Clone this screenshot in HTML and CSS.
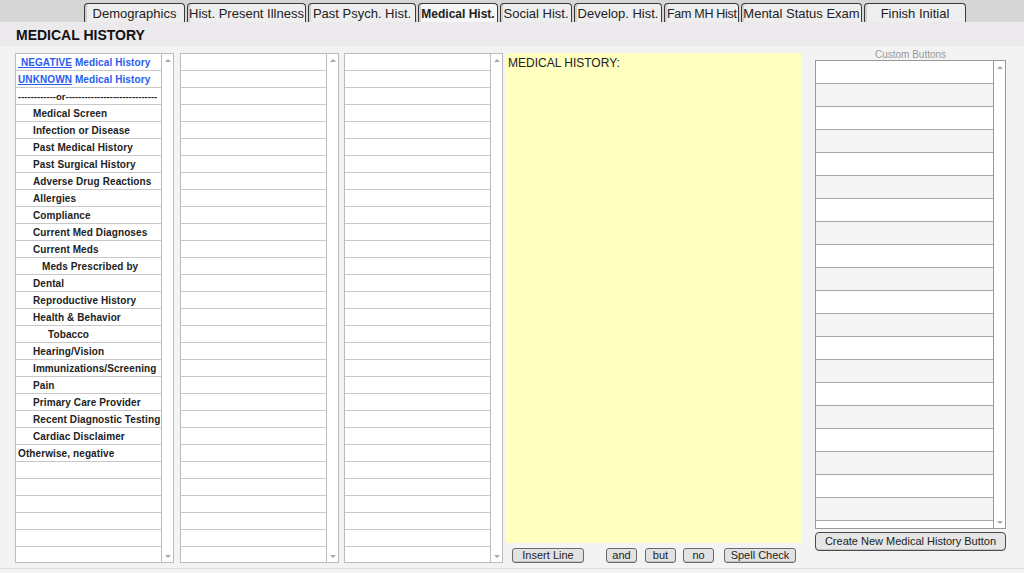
FILE: index.html
```html
<!DOCTYPE html>
<html lang="en">
<head>
    <meta charset="UTF-8">
    <meta name="viewport" content="width=device-width, initial-scale=1.0">
    <title>Medical History</title>
    <link rel="stylesheet" href="styles.css">
</head>
<body>
<div class="tabbar">
    <div class="tab t1">Demographics</div>
    <div class="tab t2">Hist. Present Illness</div>
    <div class="tab t3">Past Psych. Hist.</div>
    <div class="tab t4 active">Medical Hist.</div>
    <div class="tab t5">Social Hist.</div>
    <div class="tab t6">Develop. Hist.</div>
    <div class="tab t7">Fam MH Hist</div>
    <div class="tab t8">Mental Status Exam</div>
    <div class="tab t9">Finish Initial</div>
</div>
<div class="titlebar">MEDICAL HISTORY</div>

<div class="main">
    <div class="list col1">
        <div class="rows">
            <div class="row link"><u>&nbsp;NEGATIVE</u> Medical History</div>
            <div class="row link"><u>UNKNOWN</u> Medical History</div>
            <div class="row dash">------------or-----------------------------</div>
            <div class="row i1">Medical Screen</div>
            <div class="row i1">Infection or Disease</div>
            <div class="row i1">Past Medical History</div>
            <div class="row i1">Past Surgical History</div>
            <div class="row i1">Adverse Drug Reactions</div>
            <div class="row i1">Allergies</div>
            <div class="row i1">Compliance</div>
            <div class="row i1">Current Med Diagnoses</div>
            <div class="row i1">Current Meds</div>
            <div class="row i2">Meds Prescribed by</div>
            <div class="row i1">Dental</div>
            <div class="row i1">Reproductive History</div>
            <div class="row i1">Health &amp; Behavior</div>
            <div class="row i3">Tobacco</div>
            <div class="row i1">Hearing/Vision</div>
            <div class="row i1">Immunizations/Screening</div>
            <div class="row i1">Pain</div>
            <div class="row i1">Primary Care Provider</div>
            <div class="row i1">Recent Diagnostic Testing</div>
            <div class="row i1">Cardiac Disclaimer</div>
            <div class="row">Otherwise, negative</div>
            <div class="row"></div><div class="row"></div><div class="row"></div>
            <div class="row"></div><div class="row"></div><div class="row"></div>
        </div>
        <div class="scroll"><span class="up"></span><span class="down"></span></div>
    </div>

    <div class="list col2">
        <div class="rows" id="rows2"></div>
        <div class="scroll"><span class="up"></span><span class="down"></span></div>
    </div>

    <div class="list col3">
        <div class="rows" id="rows3"></div>
        <div class="scroll"><span class="up"></span><span class="down"></span></div>
    </div>

    <div class="note-col">
        <div class="note">MEDICAL HISTORY:</div>
        <div class="note-buttons">
            <button class="btn b-insert">Insert Line</button>
            <button class="btn b-and">and</button>
            <button class="btn b-but">but</button>
            <button class="btn b-no">no</button>
            <button class="btn b-spell">Spell Check</button>
        </div>
    </div>

    <div class="custom-col">
        <div class="custom-label">Custom Buttons</div>
        <div class="custom-list">
            <div class="custom-rows" id="customRows"></div>
            <div class="scroll"><span class="up"></span><span class="down"></span></div>
        </div>
        <button class="btn create">Create New Medical History Button</button>
    </div>
</div>

<script>
    ['rows2', 'rows3'].forEach(id => {
        const el = document.getElementById(id);
        for (let i = 0; i < 30; i++) {
            const r = document.createElement('div');
            r.className = 'row';
            el.appendChild(r);
        }
    });
    const custom = document.getElementById('customRows');
    for (let i = 0; i < 21; i++) {
        const r = document.createElement('div');
        r.className = 'crow' + (i % 2 ? ' alt' : '');
        custom.appendChild(r);
    }
</script>
</body>
</html>
```

FILE: styles.css
```css
body {
    margin: 0;
    width: 1024px;
    height: 573px;
    overflow: hidden;
    background-color: #f3f3f3;
    font-family: "Liberation Sans", Arial, sans-serif;
    color: #222;
}

.tabbar {
    height: 22px;
    background-color: #d6d6d6;
    display: flex;
    align-items: flex-end;
    padding-left: 84px;
    gap: 2px;
    box-sizing: border-box;
}

.tab {
    height: 19px;
    box-sizing: border-box;
    border: 1px solid #3a3a3a;
    border-bottom: none;
    border-radius: 4px 4px 0 0;
    background-color: #eeeeee;
    box-shadow: inset 2px 0 0 #d0d0d0;
    font-size: 13px;
    line-height: 20px;
    text-align: center;
    white-space: nowrap;
    overflow: hidden;
    color: #222;
}

.tab.active {
    font-weight: bold;
    background-color: #f6f6f6;
}

.t1 { width: 101px; }
.t2 { width: 119px; }
.t3 { width: 108px; }
.t4 { width: 80px; font-size: 12px; }
.t5 { width: 72px; }
.t6 { width: 88px; }
.t7 { width: 75px; text-align: left; padding-left: 2px; font-size: 12.5px; letter-spacing: -0.3px; }
.t8 { width: 121px; }
.t9 { width: 102px; }

.titlebar {
    height: 24px;
    background-color: #ebe9ec;
    font-weight: bold;
    font-size: 14px;
    line-height: 27px;
    padding-left: 16px;
    color: #111;
}

.main {
    display: flex;
    padding: 7px 0 0 15px;
    height: 515px;
    border-bottom: 1px solid #dcdcdc;
}

.list {
    display: flex;
    width: 159px;
    height: 510px;
}

.col2 { margin-left: 6px; }
.col3 { margin-left: 5px; }

.rows {
    flex: 1;
    border: 1px solid #bdbdbd;
    border-right: none;
    background-color: #fff;
    overflow: hidden;
}

.row {
    height: 16px;
    border-bottom: 1px solid #c8c8c8;
    font-size: 10px;
    font-weight: bold;
    letter-spacing: 0.1px;
    line-height: 17px;
    padding-left: 2px;
    white-space: nowrap;
    overflow: hidden;
    color: #222;
}

.row.link { color: #2a5cf0; }
.row.link u { text-decoration: underline; }
.row.dash { letter-spacing: 0; font-size: 9.5px; }
.row.i1 { padding-left: 17px; }
.row.i2 { padding-left: 26px; }
.row.i3 { padding-left: 32px; }

.scroll {
    width: 11px;
    border: 1px solid #bdbdbd;
    background-color: #fff;
    position: relative;
}

.scroll .up,
.scroll .down {
    position: absolute;
    left: 3px;
    width: 0;
    height: 0;
    border-left: 3px solid transparent;
    border-right: 3px solid transparent;
}

.scroll .up {
    top: 5px;
    border-bottom: 3px solid #a8a8a8;
}

.scroll .down {
    bottom: 4px;
    border-top: 3px solid #a8a8a8;
}

.note-col {
    margin-left: 2px;
    width: 296px;
    display: flex;
    flex-direction: column;
}

.note {
    height: 490px;
    background-color: #ffffc0;
    font-size: 12px;
    padding: 3px 3px;
    box-sizing: border-box;
    color: #222;
}

.note-buttons {
    display: flex;
    margin-top: 5px;
    padding-left: 7px;
}

.btn {
    font-family: "Liberation Sans", Arial, sans-serif;
    font-size: 11px;
    color: #222;
    background-color: #e2e2e2;
    border: 1px solid #6a6a6a;
    border-radius: 3px;
    height: 15px;
    padding: 0;
    line-height: 13px;
    box-shadow: inset 0 -1px 0 #c4c4c4;
}

.b-insert { width: 72px; }
.b-and { width: 31px; margin-left: 22px; }
.b-but { width: 31px; margin-left: 8px; }
.b-no { width: 31px; margin-left: 7px; }
.b-spell { width: 72px; margin-left: 10px; }

.custom-col {
    margin-left: 14px;
    width: 191px;
    display: flex;
    flex-direction: column;
    margin-top: -4px;
}

.custom-label {
    font-size: 10px;
    color: #999;
    text-align: center;
    height: 11px;
    line-height: 11px;
}

.custom-list {
    display: flex;
    height: 469px;
}

.custom-rows {
    flex: 1;
    border: 1px solid #999;
    border-right: none;
    background-color: #fff;
    overflow: hidden;
}

.custom-list .scroll {
    border-color: #999;
}

.crow {
    height: 22px;
    border-bottom: 1px solid #a8a8a8;
    background-color: #fff;
}

.crow.alt { background-color: #f4f4f4; }

.create {
    margin-top: 3px;
    height: 19px;
    border: 1px solid #4a4a4a;
    border-radius: 4px;
    background-color: #e6e6e6;
    font-size: 11px;
}
```
